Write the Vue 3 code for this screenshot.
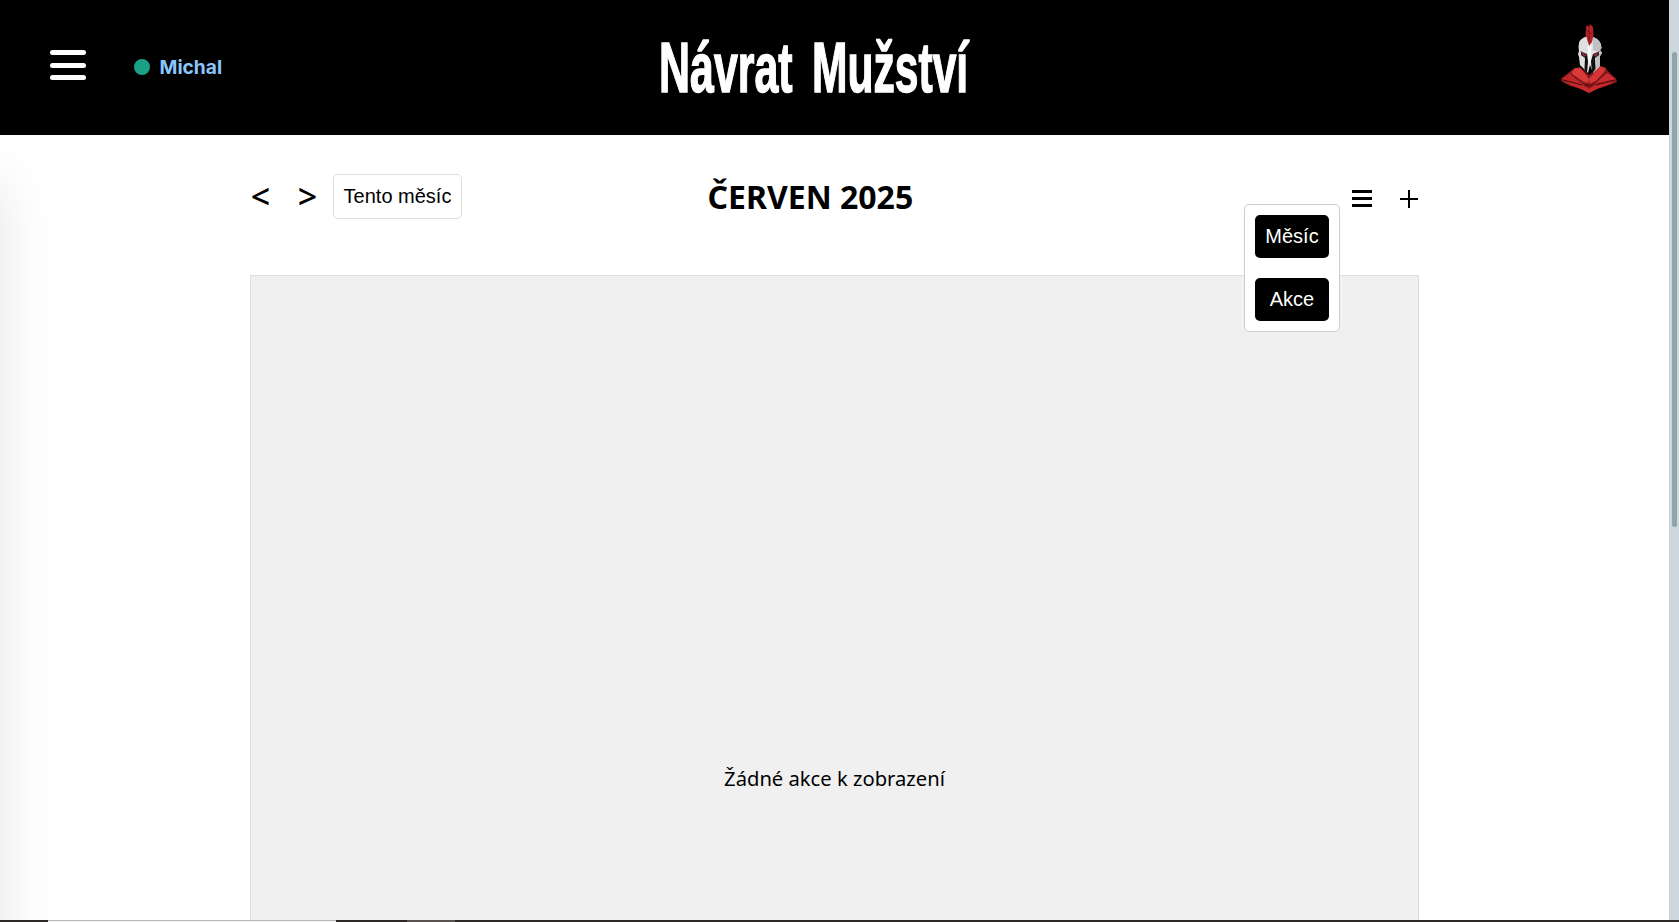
<script setup>
const views = ['Měsíc', 'Akce']
</script>

<template>
  <div class="screen">
    <div class="page">
      <header class="header">
        <button class="menu" aria-label="Menu"><i></i><i></i><i></i></button>
        <div class="user"><span class="dot"></span><span class="name">Michal</span></div>
        <svg class="brand" viewBox="0 0 312 70" width="312" height="70">
          <text transform="translate(-1 61) scale(.605 1)">Návrat</text>
          <text transform="translate(152 61) scale(.6 1)">Mužství</text>
        </svg>
        <svg class="logo" viewBox="0 0 80 85" width="80" height="85">
          <path d="M23 54 L30 52 L39 60 L48 52 L56 54 L66 64 L67 67 L57 71 L47 74 L39 78 L31 74 L20 71 L11 66 L12 63 Z" fill="#8a191d" />
          <path d="M22 57 L25 53 L30 53 L37 61 L39 65 L38 68 L34 67 L22 59 Z" fill="#d8393a" />
          <path d="M50 51 L56 53 L54 57 L46 66 L40 69 L39 64 Z" fill="#d53537" />
          <path d="M21 58 L33 67 L36 70 L30 69 L11 64 Z" fill="#bd2729" />
          <path d="M56 57 L66 64 L48 68 L43 70 L47 66 Z" fill="#c92d2f" />
          <path d="M12 66 L33 70 L39 74 L45 70 L66 66 L47 74 L39 78 L31 74 Z" fill="#c9292b" />
          <path d="M21 59 L34 69 L39 71 L45 68 L57 57 M13 65 L32 70 M65 65 L46 70" fill="none" stroke="#4b0c0f" stroke-width="1" />
          <path d="M28.5 32 Q28.5 24 35 22 L39 20 L43 22 Q51.5 25 51.5 33 L50 35 L52 38 L50 41 L50 51 L43 58 L40 50 L38 58 L30 50 L29 42 L28 39 L29 36 Z" fill="#dedfe1" />
          <path d="M43 22 Q51.5 25 51.5 33 L50 35 L52 38 L50 41 L50 51 L45 56 L46 42 L50 37 L43 35 Z" fill="#c0c1c4" />
          <path d="M31 36.5 L37 39 L38 46 L37 58 L34.5 54 L35 43 L31 40 Z" fill="#111" />
          <path d="M49 36.5 L43 39 L41 46 L42 59 L45.5 54 L45 43 L49 40 Z" fill="#111" />
          <path d="M30 36 L37 40 L34 42 Z M50 36 L43 40 L46 42 Z" fill="#843039" />
          <path d="M37.5 24 L40 21 L41.5 25 L41 46 L39.5 49 L38 46 Z" fill="#f5f5f5" />
          <path d="M36 12 L37 10 L39 12 L40 9 L43 12 L43.5 20 L42 27 L39 31 L37 24 L35.5 19 Z" fill="#b42126" />
          <path d="M39 13 L39 27 M36.5 15 L42 19" stroke="#6d151a" stroke-width=".8" />
        </svg>
      </header>

      <div class="drawer-shadow"></div>

      <main class="calendar">
        <div class="toolbar">
          <div class="nav">
            <button class="arrow">&lt;</button>
            <button class="arrow">&gt;</button>
            <button class="today">Tento měsíc</button>
          </div>
          <h1>ČERVEN 2025</h1>
          <div class="tools">
            <button class="view" aria-label="Zobrazení"><i></i><i></i><i></i></button>
            <button class="add" aria-label="Přidat"></button>
            <div class="dropdown">
              <button v-for="view in views" :key="view">{{ view }}</button>
            </div>
          </div>
        </div>
        <section class="events"><p>Žádné akce k zobrazení</p></section>
      </main>
    </div>
    <div class="scrollbar"><div class="thumb"></div></div>
    <div class="edge"><div class="status"></div><div class="tab"></div></div>
  </div>
</template>

<style>
body { margin: 0; background: #fff; overflow: hidden; }
</style>

<style scoped>
.screen {
  position: relative;
  display: flex;
  width: 1679px;
  height: 922px;
  overflow: hidden;
  background: #fff;
  color: #000;
  font-family: "Noto Sans", sans-serif;
}
button { margin: 0; padding: 0; border: 0; background: none; color: inherit; }
.page { position: relative; display: flex; flex-direction: column; flex: 1; overflow: hidden; }
.header {
  position: relative;
  z-index: 1;
  display: flex;
  align-items: flex-start;
  flex: none;
  box-sizing: border-box;
  height: 135px;
  padding: 0 39px 0 49.5px;
  background: #000;
}
.menu { display: flex; flex-direction: column; gap: 7.5px; width: 36.5px; margin-top: 50px; }
.menu i { height: 5px; border-radius: 3px; background: #fff; }
.user { display: flex; align-items: center; gap: 9.5px; width: 120px; height: 24px; margin: 55px 0 0 48px; }
.dot { width: 16px; height: 16px; border-radius: 50%; background: #1ba087; }
.name { font: 700 19.2px/24px Inter, sans-serif; color: #8ac6fc; }
.brand { margin: 31px 0 0 406px; overflow: visible; }
.brand text {
  font-family: "Liberation Sans", sans-serif;
  font-size: 71px;
  font-weight: 700;
  fill: #fff;
  stroke: #fff;
  stroke-width: 1.2px;
  vector-effect: non-scaling-stroke;
}
.logo { margin: 15px 0 0 auto; }
.drawer-shadow {
  position: absolute;
  top: 185px;
  left: -100px;
  width: 100px;
  height: 900px;
  box-shadow: 0 0 60px rgba(0, 0, 0, .11);
}
.calendar { display: flex; flex-direction: column; flex: 1; width: 1169px; margin: 0 auto; }
.toolbar { display: grid; grid-template-columns: 457.5px 1fr 459px; height: 140px; }
.nav { display: flex; align-items: flex-start; padding-top: 39px; }
.arrow { width: 21px; height: 43px; margin-right: 26px; font: 500 34px/38px "Noto Sans", sans-serif; }
.arrow + .arrow { margin-right: 15px; }
.today {
  box-sizing: border-box;
  width: 129px;
  height: 45px;
  padding-bottom: 1px;
  border: 1px solid #ddd;
  border-radius: 5px;
  font: 20px/42px "Liberation Sans", sans-serif;
  white-space: nowrap;
}
h1 { margin: 40px 0 0; font-size: 32px; line-height: 44px; font-weight: 700; white-space: nowrap; }
.tools { position: relative; display: flex; justify-content: flex-end; align-items: flex-start; gap: 28px; padding: 55px 1px 0 0; }
.view { display: flex; flex-direction: column; gap: 4px; width: 20px; }
.view i { height: 3px; background: #000; }
.add {
  width: 18px;
  height: 18px;
  background: linear-gradient(#000, #000) center / 18px 2px no-repeat, linear-gradient(#000, #000) center / 2px 18px no-repeat;
}
.dropdown {
  position: absolute;
  top: 69px;
  right: 79px;
  z-index: 2;
  display: flex;
  flex-direction: column;
  gap: 20px;
  padding: 10px;
  border: 1px solid #ccc;
  border-radius: 5px;
  background: #fff;
}
.dropdown button {
  box-sizing: border-box;
  width: 74px;
  height: 43px;
  padding-bottom: 1px;
  border-radius: 5px;
  background: #000;
  color: #fff;
  font: 20px/42px "Liberation Sans", sans-serif;
}
.events {
  display: flex;
  justify-content: center;
  align-items: flex-start;
  flex: 1;
  border: 1px solid #ddd;
  border-bottom: 0;
  background: #f0f0f0;
}
.events p { margin: 489px 0 0; font-size: 20.2px; line-height: 27px; }
.scrollbar { box-sizing: border-box; flex: none; width: 10px; padding: 52px 2px 0 3px; background: #cdd8de; }
.thumb { height: 475px; border-radius: 3px; background: #90a4ae; }
.edge { position: absolute; left: 0; bottom: 0; z-index: 3; display: flex; width: 100%; height: 2px; background: #2d2926; }
.status { box-sizing: border-box; width: 288px; margin: 0 71px 0 48px; border-top: 1px solid #bbb; background: #f2f2f2; }
.tab { width: 48px; background: #59534f; }
</style>
